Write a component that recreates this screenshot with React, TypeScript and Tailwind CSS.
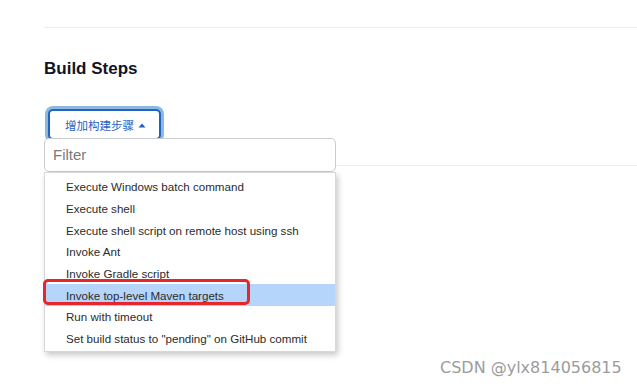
import React from "react";

const items = [
  "Execute Windows batch command",
  "Execute shell",
  "Execute shell script on remote host using ssh",
  "Invoke Ant",
  "Invoke Gradle script",
  "Invoke top-level Maven targets",
  "Run with timeout",
  'Set build status to "pending" on GitHub commit',
];

export default function App() {
  return (
    <div
      className="relative w-[637px] h-[387px] overflow-hidden bg-white"
      style={{ fontFamily: '"Liberation Sans", Arial, sans-serif' }}
    >
      <div className="pl-[44px] pt-[27px]">
        <div className="h-px bg-[#eceef0]" />
        <h2 className="mt-[31px] text-[17px] leading-[20px] font-bold text-[#14141f]">
          Build Steps
        </h2>
        <button
          className="mt-[30px] ml-[4px] flex h-[31px] w-[113px] items-center gap-[4px] rounded-[5px] border-2 border-[#1f63c6] bg-white pl-[15px] text-[#1f5fc4] ring-[3px] ring-[#8db9dc]"
          style={{ fontFamily: '"Noto Sans CJK SC", sans-serif' }}
        >
          <span className="text-[11.5px] leading-[14px]">增加构建步骤</span>
          <svg width="8" height="5" viewBox="0 0 8 5" className="mt-[1px]">
            <path d="M0.5 4.6 L4 0.6 L7.5 4.6 Z" fill="#1f5fc4" />
          </svg>
        </button>
        <div className="mt-[25px] h-px bg-[#eceef0]" />
      </div>

      <div className="absolute left-[44px] top-[138px] w-[292px]">
        <div className="flex h-[34px] items-center rounded-[5px] border border-[#c9ccd0] bg-white pl-[8px] text-[15px] text-[#7a7a7a]">
          Filter
        </div>
        <div className="relative h-[180px] border border-[#d6d8db] bg-white pt-[3px] shadow-[2px_3px_6px_rgba(0,0,0,0.22)]">
          {items.map((t, i) => (
            <div
              key={t}
              className={
                "flex h-[21.7px] items-center pl-[21px] text-[11.6px] text-[#2b2b2b] " +
                (i === 5 ? "bg-[#b5d5fb]" : "")
              }
            >
              {t}
            </div>
          ))}
          <div className="absolute left-[-2px] top-[106px] h-[26px] w-[207px] rounded-[5px] border-[3px] border-[#e6262b]" />
        </div>
      </div>

      <div
        className="absolute left-[440px] top-[358px] text-[16px] leading-[20px] text-[#9c9c9c]"
        style={{ fontFamily: '"DejaVu Sans", sans-serif' }}
      >
        CSDN @ylx814056815
      </div>
    </div>
  );
}
